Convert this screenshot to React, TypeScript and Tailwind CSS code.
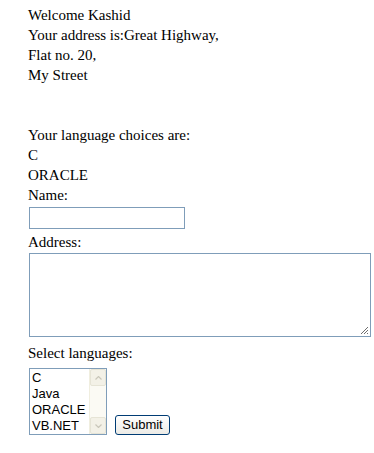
export default function App() {
  const serif = { fontFamily: '"Liberation Serif", "Times New Roman", serif' };
  const sans = { fontFamily: '"Liberation Sans", Tahoma, Arial, sans-serif' };
  return (
    <div
      className="min-h-[453px] w-[374px] bg-white pl-[28px] pt-[5px] text-[15px] leading-[20px] text-black"
      style={serif}
    >
      <div>Welcome Kashid</div>
      <div>Your address is:Great Highway,</div>
      <div>Flat no. 20,</div>
      <div>My Street</div>
      <div className="h-[40px]" />
      <div>Your language choices are:</div>
      <div>C</div>
      <div>ORACLE</div>
      <div>Name:</div>
      <div className="pl-px pt-[2px]">
        <input
          type="text"
          className="block h-[22px] w-[156px] border border-[#7f9db9] bg-white px-1 outline-none"
        />
      </div>
      <div className="pt-[3px]">Address:</div>
      <div className="pl-px pt-[1px]">
        <div className="relative h-[84px] w-[342px] border border-[#7f9db9] bg-white">
          <svg className="absolute bottom-[1px] right-[1px]" width="10" height="10" viewBox="0 0 10 10">
            <path d="M9 2 L2 9 M9 5 L5 9 M9 8 L8 9" stroke="#6d6d6d" strokeWidth="1" />
          </svg>
        </div>
      </div>
      <div className="pt-[6px]">Select languages:</div>
      <div className="flex items-end gap-[8px] pl-px pt-[5px]">
        <div
          className="flex h-[67px] w-[78px] border border-[#7f9db9] bg-white text-[13px] leading-[16px]"
          style={sans}
        >
          <div className="flex-1 pl-[2px] pt-[1px]">
            <div>C</div>
            <div>Java</div>
            <div>ORACLE</div>
            <div>VB.NET</div>
          </div>
          <div className="flex w-[17px] flex-col border-l border-[#f0eedf] bg-[#fbfaf4]">
            <div className="flex h-[17px] items-center justify-center rounded-[2px] border border-[#e6e4d6] bg-[#f3f1e7]">
              <svg width="7" height="4" viewBox="0 0 7 4">
                <path d="M0.5 3.5 L3.5 0.5 L6.5 3.5" fill="none" stroke="#c9c7ba" strokeWidth="1.2" />
              </svg>
            </div>
            <div className="flex-1" />
            <div className="flex h-[17px] items-center justify-center rounded-[2px] border border-[#e6e4d6] bg-[#f3f1e7]">
              <svg width="7" height="4" viewBox="0 0 7 4">
                <path d="M0.5 0.5 L3.5 3.5 L6.5 0.5" fill="none" stroke="#c9c7ba" strokeWidth="1.2" />
              </svg>
            </div>
          </div>
        </div>
        <button
          className="h-[20px] w-[55px] rounded-[3px] border border-[#003c74] bg-gradient-to-b from-white to-[#ecebe6] text-[13px] leading-[16px] text-black"
          style={sans}
        >
          Submit
        </button>
      </div>
    </div>
  );
}
